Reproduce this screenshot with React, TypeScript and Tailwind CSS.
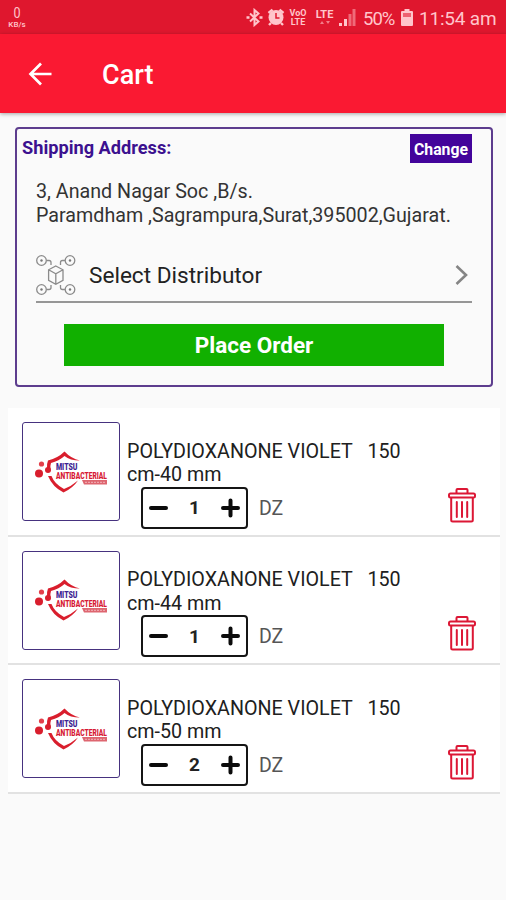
import { useState } from 'react';

interface CartItem {
  id: number;
  name: string;
  quantity: number;
}

const INITIAL_ITEMS: CartItem[] = [
  { id: 1, name: 'POLYDIOXANONE VIOLET\u00a0\u00a0 150 cm-40 mm', quantity: 1 },
  { id: 2, name: 'POLYDIOXANONE VIOLET\u00a0\u00a0 150 cm-44 mm', quantity: 1 },
  { id: 3, name: 'POLYDIOXANONE VIOLET\u00a0\u00a0 150 cm-50 mm', quantity: 2 },
];

function StatusBar() {
  return (
    <div className="flex h-[34px] items-center bg-[#df172e] pr-[10px] pl-[7px] text-[#ffc5cb]">
      <div className="flex w-5 flex-col items-center">
        <span className="scale-x-90 text-[14px] leading-[14px]">0</span>
        <span className="text-[8px] leading-[9px] font-medium">KB/s</span>
      </div>

      <div className="ml-auto flex items-center">
        <svg width="17" height="19" viewBox="0 0 17 19" fill="none" stroke="currentColor" strokeWidth="2">
          <path d="M4 5.5l8.5 8L8.5 17V2l4 3.500-8.500 8" />
          <path d="M0.500 9.500h3M13.500 9.500h3" strokeWidth="2.4" />
        </svg>
        <svg className="ml-1" width="18" height="18" viewBox="0 0 18 18">
          <circle cx="9" cy="9.5" r="7.5" fill="currentColor" />
          <path d="M1.5 5l4-3.4M16.5 5l-4-3.4M4 15l-2 2M14 15l2 2" stroke="currentColor" strokeWidth="2.4" />
          <path d="M9 5v5h3.5" fill="none" stroke="#df172e" strokeWidth="1.5" />
        </svg>
        <div className="ml-1 flex w-[18px] flex-col items-center pt-[2px] text-[9px] leading-[9px] font-bold">
          <span>VoO</span>
          <span>LTE</span>
        </div>
        <div className="ml-2 flex w-[19px] flex-col items-center">
          <span className="text-[11px] leading-[11px] font-bold">LTE</span>
          <svg width="10" height="6" viewBox="0 0 10 6" fill="#f47d89">
            <path d="M0 4L2 1l2 3zM6 1h4L8 4z" />
          </svg>
        </div>
        <svg className="ml-[5px]" width="17" height="18" viewBox="0 0 17 18">
          <path d="M0 15h3v3H0zM5 11h3v7H5z" fill="currentColor" />
          <path d="M9.5 6h3v12h-3zM13.5 1h3v17h-3z" fill="#f06b79" />
        </svg>
        <span className="ml-[7px] w-[33px] pt-[3px] text-[18.500px] leading-5 tracking-[-1px]">50%</span>
        <svg className="ml-[5px]" width="12" height="17" viewBox="0 0 12 17">
          <path d="M3.5 0h5v2H11q1 0 1 1v13q0 1-1 1H1q-1 0-1-1V3q0-1 1-1h2.5z" fill="currentColor" />
          <path d="M2 4h8v4H2z" fill="#ee6070" />
        </svg>
        <span className="ml-[6px] w-[77px] pt-[3px] text-[19px] leading-5 tracking-[-0.2px] whitespace-nowrap">11:54 am</span>
      </div>
    </div>
  );
}

function DistributorIcon() {
  return (
    <svg width="41" height="41" viewBox="0 0 41 41" fill="none" stroke="#8b8b8b" strokeWidth="1.3">
      <circle cx="5.5" cy="5.5" r="4.800" />
      <circle cx="34" cy="5.5" r="4.800" />
      <circle cx="5.5" cy="34.5" r="4.800" />
      <circle cx="34" cy="34.5" r="4.800" />
      <g fill="#777" stroke="none">
        <circle cx="5.5" cy="5.5" r="1.2" />
        <circle cx="34" cy="5.5" r="1.2" />
        <circle cx="5.5" cy="34.5" r="1.2" />
        <circle cx="34" cy="34.5" r="1.2" />
      </g>
      <path d="M10.500 5.500h2.500q2 0 2 2v2.500M29 5.500h-2.500q-2 0-2 2v2.500M10.500 34.500h2.500q2 0 2-2V30M29 34.500h-2.500q-2 0-2-2V30" />
      <path d="M19.800 11l7.200 3.800v10.500l-7.200 4-7.200-4V14.800zM12.600 14.800l7.200 4 7.200-4M19.800 18.800v10.500" />
    </svg>
  );
}

function BrandLogo() {
  return (
    <svg className="overflow-visible" width="74" height="42" viewBox="0 0 74 42">
      <path
        d="M46 9.500Q37 7.500 30.500 0.500Q24 7 14 9.500Q12.500 13 13 18L16.500 18Q16 15 17 12Q25 10 30.500 5Q36 9.500 46 9.500z"
        fill="#d91e2d"
      />
      <path d="M14 25Q18.500 36 29.500 41.500Q39 37 44 29.500Q37 35.500 30 38Q20.500 33 17.500 25z" fill="#d91e2d" />
      <circle cx="5" cy="22.500" r="4" fill="#d91e2d" />
      <circle cx="7.500" cy="13" r="2.600" fill="#e3404b" />
      <circle cx="14" cy="19" r="3" fill="#d91e2d" />
      <text x="22" y="19" fontFamily="Roboto, sans-serif" fontSize="9.500" fontWeight="900" fill="#3e2491" textLength="21.500" lengthAdjust="spacingAndGlyphs">
        MITSU
      </text>
      <text x="22" y="27.500" fontFamily="Roboto, sans-serif" fontSize="9" fontWeight="900" fill="#d71935" textLength="51" lengthAdjust="spacingAndGlyphs">
        ANTIBACTERIAL
      </text>
      <path d="M48 29h25v4.500H50z" fill="#de6670" />
      <path d="M51 31.300h20" stroke="#f2b5bb" strokeWidth="1" strokeDasharray="2 1" />
    </svg>
  );
}

function TrashIcon() {
  return (
    <svg width="28" height="35" viewBox="0 0 28 35" fill="none" stroke="#dc1735" strokeWidth="2" strokeLinejoin="round">
      <path d="M8.500 5.500V2q0-1 1-1h9q1 0 1 1v3.500" />
      <rect x="1" y="5.500" width="26" height="4" rx="1.500" />
      <path d="M3.200 10v22q0 1.500 1.500 1.500h18.600q1.500 0 1.500-1.500V10" />
      <path d="M8.800 14v15M14 14v15M19.200 14v15" strokeLinecap="round" />
    </svg>
  );
}

interface CartRowProps {
  item: CartItem;
  onChange: (quantity: number) => void;
  onRemove: () => void;
}

function CartRow({ item, onChange, onRemove }: CartRowProps) {
  return (
    <div className="flex h-[128.5px] border-b-2 border-[#e2e2e2] bg-white pt-[14px] pl-[14px]">
      <div className="flex h-[99px] w-[98px] shrink-0 items-center justify-center rounded-[3px] border-[1.5px] border-[#46327f]">
        <BrandLogo />
      </div>

      <div className="ml-[7px] flex-1 pt-[17.5px]">
        <p className="w-[290px] text-[19.7px] leading-[23.5px] text-[#202020]">{item.name}</p>
        <div className="flex items-start">
          <div className="ml-[14px] flex h-[42px] w-[107px] items-center justify-between rounded-[4px] border-2 border-[#151515] px-[6px]">
            <button onClick={() => onChange(Math.max(1, item.quantity - 1))} aria-label="Decrease quantity">
              <svg className="block" width="19" height="20" viewBox="0 0 19 20" stroke="#0b0b0b" strokeWidth="4" strokeLinecap="round">
                <path d="M2 10h15" />
              </svg>
            </button>
            <span className="text-[19px] leading-none font-bold text-[#222]">{item.quantity}</span>
            <button onClick={() => onChange(item.quantity + 1)} aria-label="Increase quantity">
              <svg className="block" width="19" height="20" viewBox="0 0 19 20" stroke="#0b0b0b" strokeWidth="4" strokeLinecap="round">
                <path d="M2 10h15M9.500 2.500v15" />
              </svg>
            </button>
          </div>
          <span className="mt-[10px] ml-[11px] text-[19.5px] leading-6 text-[#555]">DZ</span>
          <button className="mt-px mr-6 ml-auto" onClick={onRemove} aria-label="Remove item">
            <TrashIcon />
          </button>
        </div>
      </div>
    </div>
  );
}

export default function App() {
  const [items, setItems] = useState<CartItem[]>(INITIAL_ITEMS);

  const updateQuantity = (id: number, quantity: number) => {
    setItems(prev => prev.map(item => (item.id === id ? { ...item, quantity } : item)));
  };

  const removeItem = (id: number) => {
    setItems(prev => prev.filter(item => item.id !== id));
  };

  return (
    <div className="min-h-screen w-full overflow-hidden bg-[#fafafa] font-[Roboto,sans-serif]">
      <StatusBar />

      <header className="flex h-[79px] items-center bg-[#fa1932] pl-[28px] text-white shadow-[0_1px_4px_rgba(0,0,0,0.35)]">
        <button aria-label="Back">
          <svg className="block" width="24" height="24" viewBox="0 0 24 24" fill="none" stroke="currentColor" strokeWidth="2.7">
            <path d="M23.500 12H3M13 1.500L2.500 12 13 22.500" />
          </svg>
        </button>
        <h1 className="ml-[50px] pt-[3px] text-[27px] leading-8 font-medium">Cart</h1>
      </header>

      <section className="mt-[14px] ml-[15px] h-[260px] w-[478px] rounded-[4px] border-2 border-[#5d3d8e] pt-[5px] pr-[19px] pl-[5px]">
        <div className="flex items-start justify-between">
          <h2 className="pt-[2px] text-[18.2px] leading-6 font-bold text-[#3c118f]">Shipping Address:</h2>
          <button className="h-[29px] w-[62px] bg-[#43049b] pt-px text-[15.800px] leading-[29px] font-bold text-white">
            Change
          </button>
        </div>

        <p className="mt-[17px] ml-[14px] text-[19.7px] leading-[23.500px] whitespace-nowrap text-[#333]">
          3, Anand Nagar Soc ,B/s.
          <br />
          Paramdham ,Sagrampura,Surat,395002,Gujarat.
        </p>

        <button className="mt-[20px] ml-[14px] flex h-[56px] w-[436px] items-center border-b-2 border-[#969696] pt-[2px] text-left">
          <DistributorIcon />
          <span className="ml-[12px] pt-[2px] text-[22.600px] leading-7 text-[#222]">Select Distributor</span>
          <svg className="mr-[4px] ml-auto" width="13" height="20" viewBox="0 0 13 20" fill="none" stroke="#858585" strokeWidth="2.600">
            <path d="M1.500 1L11 10l-9.500 9" />
          </svg>
        </button>

        <button className="mt-[21px] ml-[42px] h-[42px] w-[380px] bg-[#11b000] pt-[2px] text-[22.500px] font-bold text-white">
          Place Order
        </button>
      </section>

      <main className="mx-2 mt-[21px] w-[492px]">
        {items.map(item => (
          <CartRow
            key={item.id}
            item={item}
            onChange={quantity => updateQuantity(item.id, quantity)}
            onRemove={() => removeItem(item.id)}
          />
        ))}
      </main>
    </div>
  );
}
